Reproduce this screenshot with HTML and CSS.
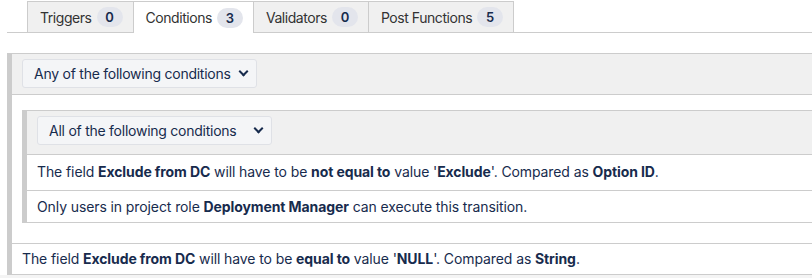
FILE: index.html
```html
<!DOCTYPE html>
<html lang="en">
    <head>
        <meta charset="UTF-8">
        <meta name="viewport" content="width=device-width, initial-scale=1.0">
        <title>Transition Conditions</title>
        <link rel="stylesheet" href="styles.css">
    </head>

    <body>
        <ul class="tabs">
            <li class="tab">Triggers <span class="badge">0</span></li>
            <li class="tab active">Conditions <span class="badge">3</span></li>
            <li class="tab">Validators <span class="badge">0</span></li>
            <li class="tab">Post Functions <span class="badge">5</span></li>
        </ul>

        <div class="group">
            <div class="group-header">
                <div class="select">Any of the following conditions <span class="chevron"></span></div>
            </div>
            <div class="group-body">
                <div class="group nested">
                    <div class="group-header">
                        <div class="select">All of the following conditions <span class="chevron"></span></div>
                    </div>
                    <div class="row">The field <b>Exclude from DC</b> will have to be <b>not equal to</b> value '<b>Exclude</b>'. Compared as <b>Option ID</b>.</div>
                    <div class="row">Only users in project role <b>Deployment Manager</b> can execute this transition.</div>
                </div>
            </div>
            <div class="row">The field <b>Exclude from DC</b> will have to be <b>equal to</b> value '<b>NULL</b>'. Compared as <b>String</b>.</div>
        </div>
        <div class="footer"></div>
    </body>
</html>
```

FILE: styles.css
```css
body {
    margin: 0;
    font-family: Inter, "Noto Sans", sans-serif;
    font-size: 14px;
    letter-spacing: -0.1px;
    color: #172b4d;
    background-color: #ffffff;
}

.tabs {
    list-style: none;
    margin: 1px 0 0 7px;
    padding: 0 0 0 20px;
    display: flex;
    border-bottom: 1px solid #ccc;
    height: 31px;
}

.tab {
    display: flex;
    align-items: center;
    gap: 5px;
    height: 30px;
    padding: 0 10px 0 12px;
    background-color: #f0f0f0;
    border: 1px solid #ccc;
    border-bottom: none;
    border-left: none;
    color: #333;
    letter-spacing: -0.45px;
}

.tab:first-child {
    border-left: 1px solid #ccc;
}

.tab.active {
    background-color: #ffffff;
    height: 31px;
    margin-bottom: -1px;
}

.badge {
    display: inline-block;
    min-width: 26px;
    height: 20px;
    line-height: 20px;
    border-radius: 10px;
    background-color: #e3e5ec;
    color: #172b4d;
    font-size: 13px;
    font-weight: 600;
    text-align: center;
    letter-spacing: 0;
}

.group {
    margin: 20px 0 0 7px;
    border-left: 5px solid #ccc;
    border-top: 1px solid #ccc;
    border-bottom: 1px solid #ccc;
}

.group-header {
    background-color: #f0f0f0;
    padding: 5px 10px 6px;
    border-bottom: 1px solid #ccc;
}

.select {
    display: inline-flex;
    align-items: center;
    justify-content: space-between;
    box-sizing: border-box;
    width: 235px;
    height: 29px;
    padding: 0 9px 0 11px;
    background-color: #f4f5f7;
    border: 1px solid #dfe1e6;
    border-radius: 3px;
    white-space: nowrap;
    vertical-align: top;
    letter-spacing: -0.25px;
}

.chevron {
    flex: none;
    width: 5px;
    height: 5px;
    border-right: 2px solid #172b4d;
    border-bottom: 2px solid #172b4d;
    transform: rotate(45deg);
    margin-top: -4px;
}

.group-body {
    padding: 15px 0 20px 10px;
}

.group.nested {
    margin: 0;
}

.nested .group-header {
    padding: 5px 10px 9px;
}

.row {
    padding: 8px 10px;
    line-height: 18px;
    border-top: 1px solid #ccc;
}

.group-header + .row {
    border-top: none;
    padding-bottom: 9px;
}

.nested .row:last-child {
    padding: 7px 10px 6px;
}

.group-body + .row {
    padding: 6px 10px;
}

.row b {
    font-weight: 700;
}

.footer {
    height: 10px;
    background-color: #f4f4f4;
}
```
